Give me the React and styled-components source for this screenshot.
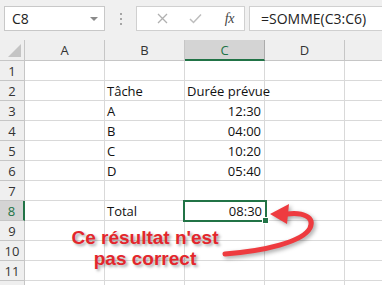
import React from 'react'
import styled, { createGlobalStyle } from 'styled-components'

const Global = createGlobalStyle`
  body { margin: 0; background: #fff; font-family: "Open Sans", "Liberation Sans", sans-serif; overflow: hidden; }
`

const Page = styled.div`
  width: 382px;
  height: 285px;
  overflow: hidden;
  position: relative;
  background: #fff;
`

const Toolbar = styled.div`
  height: 40px;
  background: #f0f0f0;
  display: flex;
  align-items: flex-start;
  padding-top: 6px;
  padding-left: 4px;
  box-sizing: border-box;
`

const NameBox = styled.div`
  width: 101px;
  height: 25px;
  box-sizing: border-box;
  background: #fff;
  border: 1px solid #c8c8c8;
  display: flex;
  align-items: center;
  justify-content: space-between;
  padding: 0 6px 0 7px;
  font-size: 14px;
  color: #222;
`

const Caret = styled.span`
  width: 0;
  height: 0;
  border-left: 4px solid transparent;
  border-right: 4px solid transparent;
  border-top: 4px solid #8a8a8a;
`

const Grip = styled.div`
  width: 31px;
  height: 25px;
  display: flex;
  flex-direction: column;
  align-items: center;
  justify-content: center;
  gap: 3px;
  & span { width: 2px; height: 2px; background: #a6a6a6; }
`

const FxBox = styled.div`
  width: 109px;
  height: 25px;
  box-sizing: border-box;
  background: #fff;
  border: 1px solid #d0d0d0;
  display: flex;
  align-items: center;
  padding-left: 13px;
`

const FxButton = styled.span`
  width: ${p => p.$w}px;
  display: flex;
  justify-content: center;
`

const Fx = styled.span`
  font-family: "Liberation Serif", serif;
  font-style: italic;
  font-size: 14px;
  color: #444;
  letter-spacing: -0.5px;
`

const FormulaBar = styled.div`
  flex: 1;
  margin-left: 4px;
  height: 25px;
  box-sizing: border-box;
  background: #fff;
  border: 1px solid #d0d0d0;
  border-right: none;
  display: flex;
  align-items: center;
  padding-left: 11px;
  font-size: 14px;
  color: #222;
`

const Sheet = styled.div`
  display: grid;
  grid-template-columns: 25px 80px 80px 80px 80px 80px;
  grid-template-rows: 21px repeat(12, 20px);
  position: relative;
`

const Corner = styled.div`
  background: #efefef;
  border-right: 1px solid #c6c6c6;
  border-bottom: 1px solid #c6c6c6;
  box-sizing: border-box;
  position: relative;
  &::after {
    content: '';
    position: absolute;
    right: 3px;
    bottom: 3px;
    width: 0;
    height: 0;
    border-left: 13px solid transparent;
    border-bottom: 13px solid #c4c4c4;
  }
`

const ColHead = styled.div`
  background: ${p => (p.$active ? '#d4d4d4' : '#efefef')};
  border-right: 1px solid ${p => (p.$active ? '#ababab' : '#c6c6c6')};
  border-bottom: ${p => (p.$active ? '2px solid #217346' : '1px solid #c6c6c6')};
  box-sizing: border-box;
  display: flex;
  align-items: center;
  justify-content: center;
  font-size: 13px;
  color: ${p => (p.$active ? '#217346' : '#333')};
  padding-top: ${p => (p.$active ? '1px' : '0')};
`

const RowHead = styled.div`
  background: ${p => (p.$active ? '#d4d4d4' : '#efefef')};
  border-right: ${p => (p.$active ? '2px solid #217346' : '1px solid #c6c6c6')};
  border-bottom: 1px solid #c6c6c6;
  box-sizing: border-box;
  display: flex;
  align-items: center;
  justify-content: center;
  font-size: 13px;
  color: ${p => (p.$active ? '#217346' : '#333')};
`

const Cell = styled.div`
  border-right: 1px solid #d9d9d9;
  border-bottom: 1px solid #d9d9d9;
  box-sizing: border-box;
  display: flex;
  align-items: flex-end;
  justify-content: ${p => (p.$right ? 'flex-end' : 'flex-start')};
  padding: 0 3px 0 2px;
  font-size: 13px;
  line-height: 18px;
  color: #111;
  white-space: nowrap;
  position: relative;
  ${p => p.$selected && `
    outline: 2px solid #217346;
    outline-offset: -1px;
    left: -1px;
    width: 82px;
    z-index: 2;
    &::after {
      content: '';
      position: absolute;
      right: -4px;
      bottom: -4px;
      width: 5px;
      height: 5px;
      background: #217346;
      border: 1px solid #fff;
    }
  `}
`

const Note = styled.div`
  position: absolute;
  left: 50px;
  top: 227px;
  width: 190px;
  text-align: center;
  font-family: "Liberation Sans", Arial, sans-serif;
  font-weight: bold;
  font-size: 19px;
  line-height: 21px;
  color: #e3262c;
  text-shadow: 2px 2px 3px rgba(0, 0, 0, 0.35);
  z-index: 3;
`

const Arrow = styled.svg`
  position: absolute;
  left: 0;
  top: 0;
  z-index: 3;
  filter: drop-shadow(2px 2px 2px rgba(0, 0, 0, 0.35));
`

const data = {
  2: ['', 'Tâche', 'Durée prévue'],
  3: ['', 'A', '12:30'],
  4: ['', 'B', '04:00'],
  5: ['', 'C', '10:20'],
  6: ['', 'D', '05:40'],
  8: ['', 'Total', '08:30'],
}

const cols = ['A', 'B', 'C', 'D', '']

const App = () => {
  const rows = Array.from({ length: 12 }, (_, i) => i + 1)
  return (
    <Page>
      <Global />
      <Toolbar>
        <NameBox>C8<Caret /></NameBox>
        <Grip><span /><span /><span /></Grip>
        <FxBox>
          <FxButton $w={26}>
            <svg width="11" height="11" viewBox="0 0 11 11"><path d="M1 1L10 10M10 1L1 10" stroke="#b0b0b0" strokeWidth="1.3" /></svg>
          </FxButton>
          <FxButton $w={40}>
            <svg width="13" height="11" viewBox="0 0 13 11"><path d="M1 6L4.5 9.5L12 1.5" stroke="#bdbdbd" strokeWidth="1.5" fill="none" /></svg>
          </FxButton>
          <FxButton $w={30}><Fx>fx</Fx></FxButton>
        </FxBox>
        <FormulaBar>=SOMME(C3:C6)</FormulaBar>
      </Toolbar>
      <Sheet>
        <Corner />
        {cols.map((c, i) => (
          <ColHead key={i} $active={c === 'C'}>{c}</ColHead>
        ))}
        {rows.map(r => (
          <React.Fragment key={r}>
            <RowHead $active={r === 8}>{r < 12 ? r : ''}</RowHead>
            {cols.map((c, i) => {
              const v = (data[r] || [])[i] || ''
              const isNum = i === 2 && r !== 2
              return (
                <Cell key={i} $right={isNum} $selected={r === 8 && i === 2}>{v}</Cell>
              )
            })}
          </React.Fragment>
        ))}
      </Sheet>
      <Note>Ce résultat n'est<br />pas correct</Note>
      <Arrow width="382" height="285" viewBox="0 0 382 285">
        <path d="M225 254 C 264 251 303 242 310 228 C 315 217 303 212 287 214" fill="none" stroke="#ee3b3f" strokeWidth="5" strokeLinecap="round" />
        <path d="M270 214 L 289 204 L 287 224 Z" fill="#ee3b3f" />
      </Arrow>
    </Page>
  )
}

export default App
